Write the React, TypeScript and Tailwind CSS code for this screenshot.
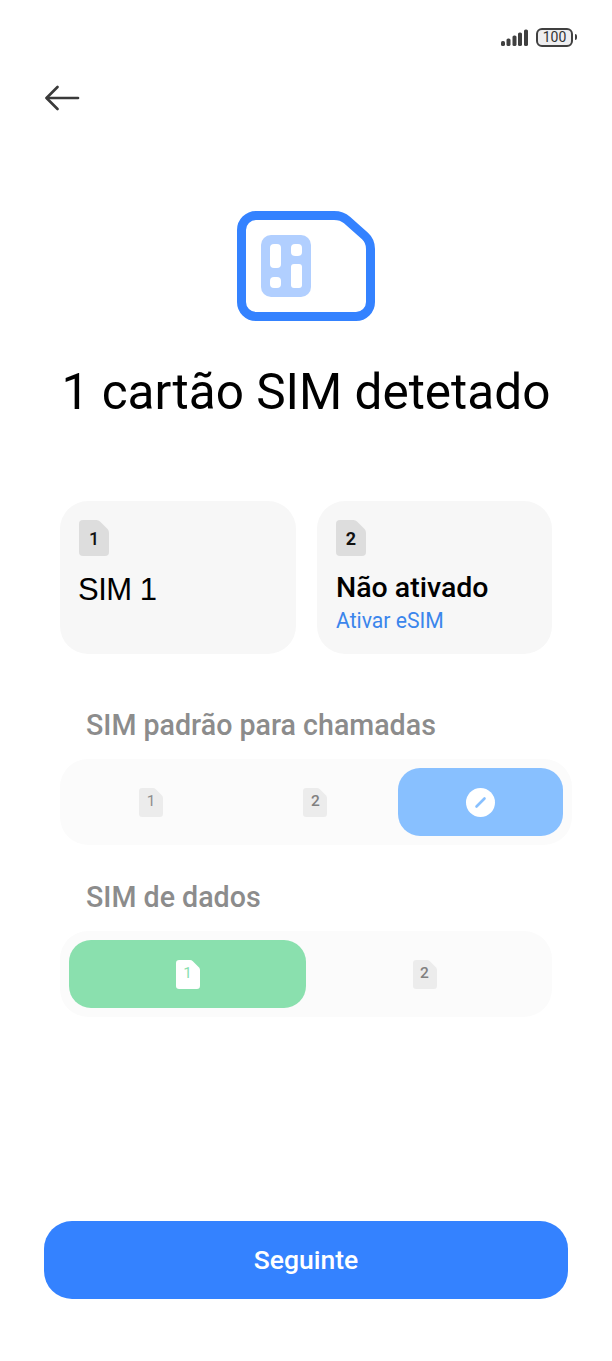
function SimBadge({
  label,
  big,
  fill,
  textClass,
}: {
  label: string;
  big?: boolean;
  fill: string;
  textClass: string;
}) {
  return (
    <div className={big ? "grid place-items-center w-[30px] h-[36px]" : "grid place-items-center w-[24px] h-[29px]"}>
      <svg viewBox="0 0 30 36" className="[grid-area:1/1] w-full h-full">
        <path
          d="M4 0H17.5Q19.5 0 21 1.5L28.5 9Q30 10.5 30 12.5V32Q30 36 26 36H4Q0 36 0 32V4Q0 0 4 0Z"
          fill={fill}
        />
      </svg>
      <span className={"[grid-area:1/1] font-['Roboto',sans-serif] " + textClass}>{label}</span>
    </div>
  );
}

function StatusBar() {
  return (
    <div className="flex items-center justify-end h-[74px] pr-[35px] gap-[8px]">
      <svg width="27" height="17" viewBox="0 0 27 17" fill="#404040">
        <rect x="0" y="12" width="4" height="5" rx="1.6" />
        <rect x="5.5" y="9.5" width="4" height="7.5" rx="1.6" />
        <rect x="11.5" y="6.5" width="4" height="10.5" rx="1.6" />
        <rect x="17" y="3.5" width="4" height="13.5" rx="1.6" />
        <rect x="23" y="0.5" width="4" height="16.5" rx="1.6" />
      </svg>
      <div className="flex items-center gap-[2px]">
        <div className="w-[37px] h-[19px] rounded-[6px] border-2 border-[#404040] bg-[#eeeef0] flex items-center justify-center font-['Roboto',sans-serif] text-[14px] leading-none text-[#333333]">
          100
        </div>
        <div className="w-[2px] h-[6px] bg-[#404040] rounded-r-sm" />
      </div>
    </div>
  );
}

export default function App() {
  return (
    <div className="w-[612px] h-[1361px] bg-white flex flex-col font-['Roboto',sans-serif]">
      <StatusBar />

      <div className="pl-[45px] h-[47px]">
        <svg width="35" height="26" viewBox="0 0 35 26" fill="none" stroke="#3a3a3a" strokeWidth="2.6" strokeLinecap="round" strokeLinejoin="round" className="mt-[11px]">
          <path d="M33 13H2" />
          <path d="M12.5 2L1.5 13L12.5 24" />
        </svg>
      </div>

      <div className="flex justify-center mt-[90px]">
        <svg width="138" height="110" viewBox="0 0 138 110" fill="none">
          <path
            d="M19 4.5H97Q105 4.5 110 9L128 25Q133.5 30 133.5 38V91A14.5 14.5 0 0 1 119 105.5H19A14.5 14.5 0 0 1 4.5 91V19A14.5 14.5 0 0 1 19 4.5Z"
            stroke="#3482ff"
            strokeWidth="9"
          />
          <rect x="24" y="24" width="50" height="62" rx="10" fill="#b1cfff" />
          <rect x="33" y="33" width="11" height="24" rx="4" fill="white" />
          <rect x="54" y="33" width="11" height="12" rx="4" fill="white" />
          <rect x="33" y="66" width="11" height="11" rx="4" fill="white" />
          <rect x="54" y="53" width="11" height="24" rx="3" fill="white" />
        </svg>
      </div>

      <h1 className="mt-[38px] text-center text-[49.5px] leading-[66px] font-normal text-black">
        1 cartão SIM detetado
      </h1>

      <div className="mt-[76px] pl-[60px] flex gap-[21px]">
        <div className="w-[236px] h-[153px] rounded-[28px] bg-[#f7f7f7] pt-[19px] pl-[19px]">
          <SimBadge big label="1" fill="#dddddd" textClass="text-[18px] font-medium text-[#111111]" />
          <p className="mt-[15px] -ml-[1px] font-['Liberation_Sans',sans-serif] text-[31px] tracking-[-0.5px] leading-[38px] text-black">SIM 1</p>
        </div>
        <div className="w-[235px] h-[153px] rounded-[28px] bg-[#f7f7f7] pt-[19px] pl-[19px]">
          <SimBadge big label="2" fill="#dddddd" textClass="text-[18px] font-bold text-[#111111]" />
          <p className="mt-[14px] text-[28.5px] leading-[36px] font-medium text-black">Não ativado</p>
          <p className="mt-[1px] text-[21.2px] leading-[28px] text-[#3b86ec]">Ativar eSIM</p>
        </div>
      </div>

      <p className="mt-[53px] pl-[86px] text-[28.6px] leading-[36px] font-medium text-[#8c8c8c]">SIM padrão para chamadas</p>

      <div className="mt-[16px] ml-[60px] w-[512px] h-[86px] rounded-[28px] bg-[#fbfbfb] p-[9px] flex items-center">
        <div className="w-[165px] flex justify-center">
          <SimBadge label="1" fill="#ececec" textClass="text-[15.5px] font-normal text-[#8e8e8e]" />
        </div>
        <div className="w-[165px] flex justify-center">
          <SimBadge label="2" fill="#ececec" textClass="text-[15.5px] font-medium text-[#808080]" />
        </div>
        <div className="w-[166px] h-[68px] rounded-[22px] bg-[#88c0ff] flex items-center justify-center">
          <svg width="29" height="29" viewBox="0 0 29 29">
            <circle cx="14.5" cy="14.5" r="14.5" fill="white" />
            <path d="M10.5 18.5L18.5 10.5" stroke="#88c0ff" strokeWidth="2.6" strokeLinecap="round" />
          </svg>
        </div>
      </div>

      <p className="mt-[34px] pl-[86px] text-[28.6px] leading-[36px] font-medium text-[#8c8c8c]">SIM de dados</p>

      <div className="mt-[16px] ml-[60px] w-[492px] h-[86px] rounded-[28px] bg-[#fbfbfb] p-[9px] flex items-center">
        <div className="w-[237px] h-[68px] rounded-[22px] bg-[#8ae0ae] flex items-center justify-center">
          <SimBadge label="1" fill="#ffffff" textClass="text-[15.5px] font-normal text-[#8ae0ae]" />
        </div>
        <div className="w-[237px] flex justify-center">
          <SimBadge label="2" fill="#ececec" textClass="text-[15.5px] font-medium text-[#808080]" />
        </div>
      </div>

      <button className="mt-[204px] ml-[44px] w-[524px] h-[78px] rounded-[28px] bg-[#3482ff] text-white text-[26.5px] font-medium">
        Seguinte
      </button>
    </div>
  );
}
